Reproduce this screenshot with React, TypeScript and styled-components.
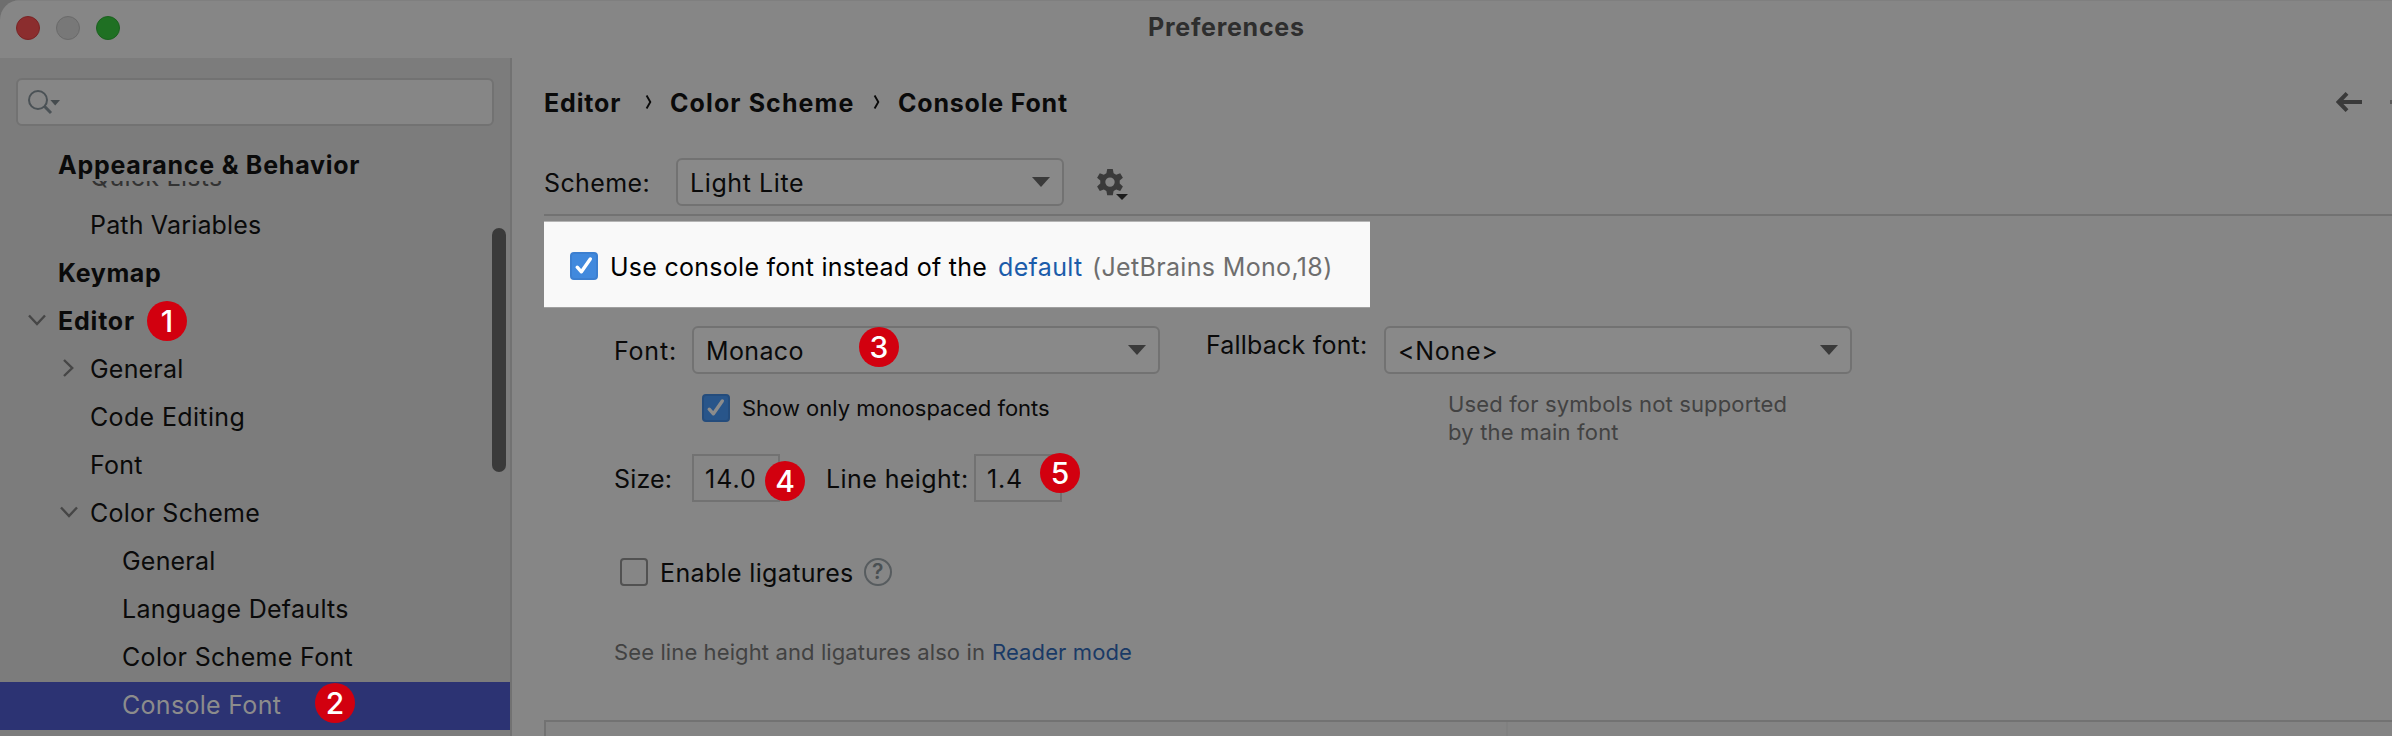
import React from "react";
import styled, { createGlobalStyle, css } from "styled-components";

const c = {
  panel: "#868686",
  sidebar: "#7c7c7c",
  line: "#727272",
  field: "#898989",
  ink: "#0a0a0a",
  muted: "#424242",
  icon: "#3a3a3a",
  link: "#1a3a66",
  selection: "#2c3373",
  badge: "#d2000f",
};

const GlobalStyle = createGlobalStyle`
  * { box-sizing: border-box; }
  body {
    margin: 0;
    overflow: hidden;
    background: #6e6e6e;
    color: ${c.ink};
    font-family: Inter, "Liberation Sans", sans-serif;
  }
  svg { display: block; flex: none; }
`;

const Window = styled.div`
  width: 2392px;
  height: 736px;
  display: flex;
  flex-direction: column;
  overflow: hidden;
  border-top-left-radius: 20px;
  background: ${c.panel};
`;

/* Title bar */

const TitleBar = styled.header`
  height: 58px;
  flex: none;
  display: flex;
  align-items: flex-start;
  padding: 15px 0 0 16px;
  border-top: 1px solid #7f7f7f;
`;

const Lights = styled.div`
  display: flex;
  gap: 16px;
  width: 1132px;
`;

const Light = styled.span<{ $fill: string; $edge: string }>`
  width: 24px;
  height: 24px;
  border-radius: 50%;
  background: ${(p) => p.$fill};
  border: 1px solid ${(p) => p.$edge};
`;

const Text = styled.span<{ $track?: number }>`
  flex: none;
  font-size: 25px;
  line-height: 26px;
  padding-top: 2px;
  white-space: nowrap;
  letter-spacing: ${(p) => p.$track ?? 0.25}px;
`;

const Title = styled(Text)`
  margin-top: -2px;
  padding: 0;
  font-weight: 700;
  color: #2e2e2e;
`;

const SmallText = styled(Text)`
  font-size: 22px;
  line-height: 28px;
  padding-top: 0;
`;

/* Numbered callouts */

const Badge = styled.b<{ $x: number; $y: number }>`
  position: absolute;
  left: ${(p) => p.$x}px;
  top: ${(p) => p.$y}px;
  width: 40px;
  height: 40px;
  border-radius: 50%;
  background: ${c.badge};
  color: #fff;
  font-size: 30px;
  font-weight: 500;
  line-height: 40px;
  text-align: center;
`;

/* Sidebar */

const Body = styled.div`
  flex: 1;
  min-height: 0;
  display: flex;
`;

const Sidebar = styled.aside`
  position: relative;
  width: 512px;
  flex: none;
  display: flex;
  flex-direction: column;
  padding-top: 20px;
  background: ${c.sidebar};
  border-right: 2px solid ${c.line};
`;

const SearchBox = styled.div`
  height: 48px;
  flex: none;
  margin: 0 16px;
  padding: 10px 0 0 10px;
  border: 2px solid ${c.line};
  border-radius: 6px;
  background: ${c.panel};
`;

const StickyHeader = styled.div`
  height: 55px;
  flex: none;
  padding: 24px 0 0 58px;
`;

const HeaderText = styled(Text)`
  display: block;
  font-weight: 700;
`;

const Tree = styled.div`
  flex: 1;
  min-height: 0;
  overflow: hidden;
`;

const Row = styled.div<{ $level: number; $selected?: boolean }>`
  position: relative;
  height: 48px;
  display: flex;
  align-items: center;
  padding-bottom: 4px;
  padding-left: ${(p) => [26, 58, 90][p.$level]}px;
  font-weight: ${(p) => (p.$level === 0 ? 700 : 400)};
  ${(p) =>
    p.$selected &&
    css`
      background: ${c.selection};
      color: #8c8c8c;
    `}
`;

const ClippedRow = styled(Row)`
  margin-top: -27px;
  color: #333;
`;

const Twisty = styled.span`
  width: 32px;
  flex: none;
`;

const Scrollbar = styled.div`
  position: absolute;
  right: 4px;
  top: 170px;
  width: 14px;
  height: 244px;
  border-radius: 7px;
  background: #3a3a3a;
`;

/* Content */

const Content = styled.main`
  flex: 1;
  min-width: 0;
  display: flex;
  flex-direction: column;
`;

const Breadcrumbs = styled.nav`
  height: 100px;
  flex: none;
  display: flex;
  align-items: center;
  padding: 0 0 12px 32px;
  font-weight: 700;
`;

const Crumb = styled(Text)<{ $w: number }>`
  width: ${(p) => p.$w}px;
`;

const Separator = styled.span`
  width: 25px;
  flex: none;
`;

const History = styled.div`
  margin-left: auto;
  display: flex;
  gap: 28px;
  width: 56px;
  overflow: hidden;
`;

const SchemeRow = styled.div`
  height: 56px;
  flex: none;
  display: flex;
  align-items: flex-start;
  padding-left: 32px;
`;

const Label = styled(Text)<{ $w: number; $raised?: boolean }>`
  width: ${(p) => p.$w}px;
  height: 48px;
  line-height: ${(p) => (p.$raised ? 36 : 48)}px;
  padding-top: 1px;
`;

const Combo = styled.div<{ $w: number }>`
  position: relative;
  width: ${(p) => p.$w}px;
  height: 48px;
  flex: none;
  display: flex;
  align-items: center;
  justify-content: space-between;
  padding: 0 12px;
  border: 2px solid ${c.line};
  border-radius: 6px;
  background: ${c.field};
`;

const NumberField = styled.div`
  position: relative;
  width: 88px;
  height: 48px;
  flex: none;
  display: flex;
  align-items: center;
  padding-left: 11px;
  border: 2px solid ${c.line};
  background: ${c.panel};
`;

const GearButton = styled.span`
  padding: 10px 0 0 32px;
`;

const Divider = styled.hr`
  height: 2px;
  flex: none;
  margin: 0 0 5px 32px;
  border: 0;
  background: ${c.line};
`;

const Spotlight = styled.section`
  width: 826px;
  height: 87px;
  flex: none;
  display: flex;
  align-items: center;
  margin-left: 32px;
  padding: 2px 0 0 26px;
  background: #f9f9f9;
  border-top: 1px solid #b4b4b4;
  border-bottom: 1px solid #a0a0a0;
  color: #000;
`;

const SpotText = styled(Text)<{ $w?: number; $color?: string }>`
  width: ${(p) => (p.$w ? `${p.$w}px` : "auto")};
  color: ${(p) => p.$color ?? "inherit"};
`;

const CheckBox = styled.span<{ $bg: string; $edge: string; $gap: number }>`
  width: 28px;
  height: 28px;
  flex: none;
  margin-right: ${(p) => p.$gap}px;
  border: 2px solid ${(p) => p.$edge};
  border-radius: 4px;
  background: ${(p) => p.$bg};
`;

const FormLine = styled.div<{ $top: number; $left?: number; $h?: number }>`
  height: ${(p) => p.$h ?? 48}px;
  flex: none;
  display: flex;
  align-items: center;
  margin-top: ${(p) => p.$top}px;
  padding-left: ${(p) => p.$left ?? 102}px;
`;

const FieldPair = styled.div<{ $gap: number }>`
  display: flex;
  margin-right: ${(p) => p.$gap}px;
`;

const CheckAndHint = styled.div`
  height: 60px;
  flex: none;
  display: flex;
  align-items: flex-start;
  margin-top: 20px;
  padding-left: 190px;
`;

const CheckLine = styled.div`
  width: 746px;
  display: flex;
  align-items: center;
`;

const Hint = styled.div`
  display: flex;
  flex-direction: column;
  margin-top: -4px;
`;

const Muted = styled(SmallText)`
  color: ${c.muted};
`;

const Link = styled(SmallText)`
  margin-left: 7px;
  color: ${c.link};
`;

const Preview = styled.section`
  flex: 1;
  display: flex;
  margin: 54px 0 0 32px;
  border: solid ${c.line};
  border-width: 2px 0 0 2px;
  background: #848484;
`;

const Gutter = styled.div`
  width: 962px;
  border-right: 2px solid #808080;
`;

/* Icons */

const ChevronDown = () => (
  <svg width="20" height="14" viewBox="0 0 20 14" fill="none" stroke="#464646" strokeWidth="2.4">
    <path d="M3 2.5 11 11 19 2.5" />
  </svg>
);

const ChevronRight = () => (
  <svg width="20" height="18" viewBox="0 0 20 18" fill="none" stroke="#464646" strokeWidth="2.4">
    <path d="M6 1 14.2 9 6 17" />
  </svg>
);

const Angle = () => (
  <svg width="8" height="16" viewBox="0 0 8 16" fill="none" stroke={c.ink} strokeWidth="1.9">
    <path d="M1.6 1.6 5.3 8 1.6 14.4" />
  </svg>
);

const Caret = () => (
  <svg width="18" height="10" viewBox="0 0 18 10" fill={c.icon}>
    <path d="M0 0h18L9 10z" />
  </svg>
);

const Check = ({ color }: { color: string }) => (
  <svg
    width="24"
    height="24"
    viewBox="0 0 24 24"
    fill="none"
    stroke={color}
    strokeWidth="3.4"
    strokeLinecap="round"
    strokeLinejoin="round"
  >
    <path d="M5.2 13.2 9.4 17.8 18.3 5" />
  </svg>
);

const SearchIcon = () => (
  <svg width="34" height="26" viewBox="0 0 34 26" fill="none" stroke="#4b5256" strokeWidth="2">
    <circle cx="10" cy="10" r="9" />
    <path d="M16.4 16.2 23 23" strokeWidth="3" />
    <path d="M22.4 10H32l-4.8 5.6z" fill="#454b4e" stroke="none" />
  </svg>
);

const GearIcon = () => (
  <svg width="34" height="34" viewBox="0 0 34 34" fill={c.icon}>
    <path
      fillRule="evenodd"
      d="M11.2 1h5.6l.8 4.2 2.6 1.5 4-1.5 2.7 4.6-3.2 2.8v3l3.2 2.8-2.7 4.6-4-1.4-2.6 1.4-.8 4.2h-5.6l-.8-4.2-2.6-1.4-4 1.4-2.7-4.6 3.2-2.8v-3L1.1 9.8l2.7-4.6 4 1.5 2.6-1.5zM14 9.4a4.7 4.7 0 1 0 0 9.4a4.7 4.7 0 1 0 0-9.4z"
    />
    <path d="M20 26h12l-6 6z" fill="#1c1c1c" />
  </svg>
);

const BackArrow = () => (
  <svg width="26" height="20" viewBox="0 0 26 20" fill="none" stroke={c.icon} strokeWidth="4">
    <path d="M2.5 10H26M11 1.4 2.6 10 11 18.6" />
  </svg>
);

const ForwardArrow = () => (
  <svg width="26" height="20" viewBox="0 0 26 20" fill="none" stroke="#5a5a5a" strokeWidth="4">
    <path d="M0 10h23.5M15 1.4 23.4 10 15 18.6" />
  </svg>
);

const HelpCircle = styled.span`
  width: 28px;
  height: 28px;
  flex: none;
  margin-left: 10px;
  border: 2px solid #575c5f;
  border-radius: 50%;
  color: #4a5053;
  font-size: 21px;
  font-weight: 600;
  line-height: 24px;
  text-align: center;
`;

type Item = {
  name: string;
  level: number;
  track: number;
  open?: boolean;
  badge?: [string, number, number];
  selected?: boolean;
};

const items: Item[] = [
  { name: "Path Variables", level: 1, track: 0.17 },
  { name: "Keymap", level: 0, track: 0.64 },
  { name: "Editor", level: 0, track: 0.81, open: true, badge: ["1", 147, 3] },
  { name: "General", level: 1, track: 0.2, open: false },
  { name: "Code Editing", level: 1, track: 0.35 },
  { name: "Font", level: 1, track: 0.2 },
  { name: "Color Scheme", level: 1, track: 0.27, open: true },
  { name: "General", level: 2, track: 0.2 },
  { name: "Language Defaults", level: 2, track: 0.29 },
  { name: "Color Scheme Font", level: 2, track: 0.32 },
  { name: "Console Font", level: 2, track: 0.3, selected: true, badge: ["2", 315, 1] },
];

export default function App() {
  return (
    <>
      <GlobalStyle />
      <Window>
        <TitleBar>
          <Lights>
            <Light $fill="#8b2d2e" $edge="#7a2425" />
            <Light $fill="#787878" $edge="#6a6a6a" />
            <Light $fill="#1f7023" $edge="#1b611f" />
          </Lights>
          <Title $track={0.74}>Preferences</Title>
        </TitleBar>
        <Body>
          <Sidebar>
            <SearchBox>
              <SearchIcon />
            </SearchBox>
            <StickyHeader>
              <HeaderText $track={0.76}>Appearance &amp; Behavior</HeaderText>
            </StickyHeader>
            <Tree>
              <ClippedRow $level={1}>
                <Twisty />
                <Text $track={0.27}>Quick Lists</Text>
              </ClippedRow>
              {items.map((it, i) => (
                <Row key={i} $level={it.level} $selected={it.selected}>
                  <Twisty>
                    {it.open === true && <ChevronDown />}
                    {it.open === false && <ChevronRight />}
                  </Twisty>
                  <Text $track={it.track}>{it.name}</Text>
                  {it.badge && (
                    <Badge $x={it.badge[1]} $y={it.badge[2]}>
                      {it.badge[0]}
                    </Badge>
                  )}
                </Row>
              ))}
            </Tree>
            <Scrollbar />
          </Sidebar>
          <Content>
            <Breadcrumbs>
              <Crumb $w={101} $track={0.85}>Editor</Crumb>
              <Separator><Angle /></Separator>
              <Crumb $w={203} $track={1.1}>Color Scheme</Crumb>
              <Separator><Angle /></Separator>
              <Crumb $w={180} $track={0.8}>Console Font</Crumb>
              <History>
                <BackArrow />
                <ForwardArrow />
              </History>
            </Breadcrumbs>
            <SchemeRow>
              <Label $w={132} $track={0.4}>Scheme:</Label>
              <Combo $w={388}>
                <Text $track={0.6}>Light Lite</Text>
                <Caret />
              </Combo>
              <GearButton><GearIcon /></GearButton>
            </SchemeRow>
            <Divider />
            <Spotlight>
              <CheckBox $bg="#4189dd" $edge="#3c7fd0" $gap={12}>
                <Check color="#fff" />
              </CheckBox>
              <SpotText $w={388} $track={0.27}>Use console font instead of the</SpotText>
              <SpotText $w={94} $track={0.34} $color="#1b5caa">default</SpotText>
              <SpotText $track={0.34} $color="#6e6e6e">(JetBrains Mono,18)</SpotText>
            </Spotlight>
            <FormLine $top={18}>
              <FieldPair $gap={46}>
                <Label $w={78} $track={0.8}>Font:</Label>
                <Combo $w={468}>
                  <Text $track={0.35}>Monaco</Text>
                  <Caret />
                  <Badge $x={165} $y={-1}>3</Badge>
                </Combo>
              </FieldPair>
              <Label $w={178} $raised $track={0.2}>Fallback font:</Label>
              <Combo $w={468}>
                <Text $track={0.7}>&lt;None&gt;</Text>
                <Caret />
              </Combo>
            </FormLine>
            <CheckAndHint>
              <CheckLine>
                <CheckBox $bg="#28558a" $edge="#244c7c" $gap={12}>
                  <Check color="#8c8c8c" />
                </CheckBox>
                <SmallText $track={-0.01}>Show only monospaced fonts</SmallText>
              </CheckLine>
              <Hint>
                <Muted $track={0.14}>Used for symbols not supported</Muted>
                <Muted $track={0.18}>by the main font</Muted>
              </Hint>
            </CheckAndHint>
            <FormLine $top={0}>
              <FieldPair $gap={46}>
                <Label $w={78} $track={0.15}>Size:</Label>
                <NumberField>
                  <Text $track={1}>14.0</Text>
                  <Badge $x={71} $y={5}>4</Badge>
                </NumberField>
              </FieldPair>
              <Label $w={148} $track={0.42}>Line height:</Label>
              <NumberField>
                <Text $track={0.81}>1.4</Text>
                <Badge $x={64} $y={-3}>5</Badge>
              </NumberField>
            </FormLine>
            <FormLine $top={56} $left={108} $h={28}>
              <CheckBox $bg="transparent" $edge="#515151" $gap={12} />
              <Text $track={0.35}>Enable ligatures</Text>
              <HelpCircle>?</HelpCircle>
            </FormLine>
            <FormLine $top={52} $left={102} $h={28}>
              <Muted $track={0.11}>See line height and ligatures also in</Muted>
              <Link $track={0.11}>Reader mode</Link>
            </FormLine>
            <Preview>
              <Gutter />
            </Preview>
          </Content>
        </Body>
      </Window>
    </>
  );
}
